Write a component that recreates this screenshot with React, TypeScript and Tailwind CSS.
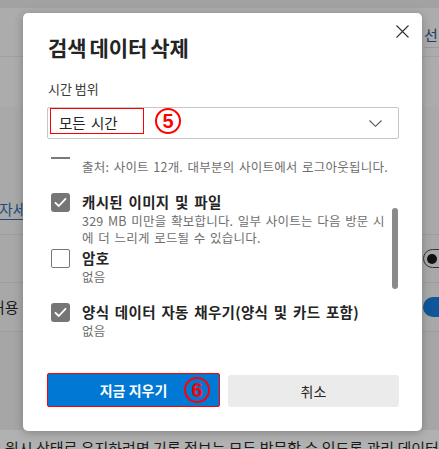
import React from 'react';

const font = { fontFamily: '"Noto Sans CJK KR", "Noto Sans", sans-serif' };

function CheckBox({ checked }: { checked: boolean }) {
  if (!checked) {
    return <div className="mt-px h-[19px] w-[19px] shrink-0 rounded-[2px] border border-[#767676] bg-white" />;
  }
  return (
    <div className="mt-px flex h-[19px] w-[19px] shrink-0 items-center justify-center rounded-[3px] bg-[#767676]">
      <svg width="13" height="11" viewBox="0 0 13 11" fill="none">
        <path d="M1.5 5.8 L4.8 9 L11.5 1.8" stroke="white" strokeWidth="1.8" strokeLinecap="round" strokeLinejoin="round" />
      </svg>
    </div>
  );
}

function Item({ checked, title, lines, className }: { checked: boolean; title: string; lines: string[]; className: string }) {
  return (
    <div className={`flex items-start gap-3 pl-1 ${className}`}>
      <CheckBox checked={checked} />
      <div className="min-w-0">
        <div className="whitespace-nowrap text-[14.5px] font-semibold leading-[20px] tracking-[0.3px] text-[#242424] [word-spacing:2px]">
          {title}
        </div>
        {lines.map((l) => (
          <div key={l} className="whitespace-nowrap text-[12.5px] leading-[17px] tracking-[0.22px] text-[#6e6e6e] [word-spacing:1.5px]">
            {l}
          </div>
        ))}
      </div>
    </div>
  );
}

function Marker({ n, className }: { n: string; className: string }) {
  return (
    <span
      className={`absolute flex h-[26px] w-[26px] items-center justify-center rounded-full border-[2.5px] border-[#ff0000] text-[20px] font-bold leading-none text-[#ff0000] ${className}`}
      style={{ fontFamily: '"Liberation Sans", Arial, sans-serif' }}
    >
      {n}
    </span>
  );
}

export default function App() {
  return (
    <div className="relative h-[449px] w-[439px] overflow-hidden bg-[#a7a7a7]" style={font}>
      {/* dimmed page behind the dialog */}
      <div className="h-[8px] bg-[#a2a2a2]" />
      <div className="flex h-[49px] items-start justify-start border-b border-[#a0a0a0] bg-[#acacac] pl-[424px]">
        <div className="mt-[16px] flex h-[24px] items-center whitespace-nowrap border-b border-[#9a9a9a] text-[15px] text-[#1c3f66]">
          선<span className="ml-[2px] h-[10px] w-[3px] bg-[#c79a3a]" />
        </div>
      </div>
      <div className="h-[50px] bg-[#acacac]" />
      <div className="flex h-[128px] items-end border-b border-[#9d9d9d] bg-[#a9a9a9] pb-[14px]">
        <span className="-ml-[1px] whitespace-nowrap border-b border-[#1f4e7c] text-[15px] leading-[20px] text-[#1f4e7c]">자세히 알아보기</span>
      </div>
      <div className="flex h-[48px] items-center border-b border-[#9d9d9d] bg-[#a8a8a8] pl-[423px]">
        <div className="flex h-[19px] w-[40px] shrink-0 items-center rounded-full border border-[#333] pl-[3px]">
          <div className="h-[10px] w-[10px] rounded-full bg-[#111]" />
        </div>
      </div>
      <div className="flex h-[49px] items-center border-b border-[#9d9d9d] bg-[#a8a8a8]">
        <span className="-ml-[9px] whitespace-nowrap text-[15px] text-[#1a1a1a]">허용</span>
        <div className="ml-auto mr-[-24px] h-[20px] w-[40px] shrink-0 rounded-full bg-[#0f5799]" />
      </div>
      <div className="h-[98px] bg-[#a6a6a6]" />
      <div className="h-[30px] bg-[#b1b1b1] pl-[5px] pt-[8px] text-[15px] leading-[20px] whitespace-nowrap text-[#1a1a1a]">
        원시 상태로 유지하려면 기록 정보는 모두 방문할 수 있도록 관리 데이터
      </div>

      {/* dialog */}
      <div className="absolute left-[23px] top-[13px] w-[399px] rounded-[5px] bg-white pb-[24px] pl-6 pr-[23px] shadow-[0_2px_10px_rgba(0,0,0,0.25)]">
        <div className="flex items-start justify-between pt-[12px]">
          <h1 className="mt-[7px] pl-px text-[21px] font-bold leading-[30px] text-[#242424] [word-spacing:-2px]">
            검색 데이터 삭제
          </h1>
          <svg className="mr-[-10px]" width="13" height="13" viewBox="0 0 13 13" fill="none">
            <path d="M0.5 0.5 L12.5 12.5 M12.5 0.5 L0.5 12.5" stroke="#333" strokeWidth="1.1" />
          </svg>
        </div>

        <div className="mt-[18px] pl-px text-[13px] leading-[18px] text-[#3a3a3a]">시간 범위</div>

        <div className="relative mt-[9px] flex h-[32px] items-center rounded-[2px] border border-[#c6c6c6] pl-[11px] pr-[16px]">
          <span className="text-[14.5px] text-[#242424] [word-spacing:2px]">모든 시간</span>
          <svg className="ml-auto" width="13" height="7" viewBox="0 0 13 7" fill="none">
            <path d="M0.5 0.5 L6.5 6.3 L12.5 0.5" stroke="#555" strokeWidth="1.1" />
          </svg>
          <span className="absolute left-[2px] top-0 h-[26px] w-[94px] border-[1.5px] border-[#ff0000]" />
          <Marker n="5" className="left-[107px] top-0" />
        </div>

        <div className="mt-[18px] flex">
          <div className="flex-1">
            <div className="flex items-start gap-3 pl-1">
              <div className="h-[2px] w-[19px] shrink-0 bg-[#7a7a7a]" />
              <div className="whitespace-nowrap pt-px text-[12.5px] leading-[17px] tracking-[0.22px] text-[#6e6e6e] [word-spacing:1.5px]">
                출처: 사이트 12개. 대부분의 사이트에서 로그아웃됩니다.
              </div>
            </div>
            <Item
              className="mt-[17px]"
              checked
              title="캐시된 이미지 및 파일"
              lines={['329 MB 미만을 확보합니다. 일부 사이트는 다음 방문 시', '에 더 느리게 로드될 수 있습니다.']}
            />
            <Item className="mt-[2px]" checked={false} title="암호" lines={['없음']} />
            <Item className="mt-[17px]" checked title="양식 데이터 자동 채우기(양식 및 카드 포함)" lines={['없음']} />
          </div>
          <div className="mr-px mt-[51px] h-[81px] w-[6px] rounded-full bg-[#8a8a8a]" />
        </div>

        <div className="mt-[34px] flex items-end gap-2">
          <button className="relative flex h-[34px] flex-1 items-center justify-center rounded-[2px] border-[1.5px] border-[#ff0000] bg-[#0078d4] text-[14px] font-semibold text-white">
            지금 지우기
            <Marker n="6" className="left-[136px] top-[3px]" />
          </button>
          <button className="flex h-[32px] flex-1 items-center justify-center rounded-[3px] bg-[#ebebeb] text-[14px] text-[#262626]">
            취소
          </button>
        </div>
      </div>
    </div>
  );
}
